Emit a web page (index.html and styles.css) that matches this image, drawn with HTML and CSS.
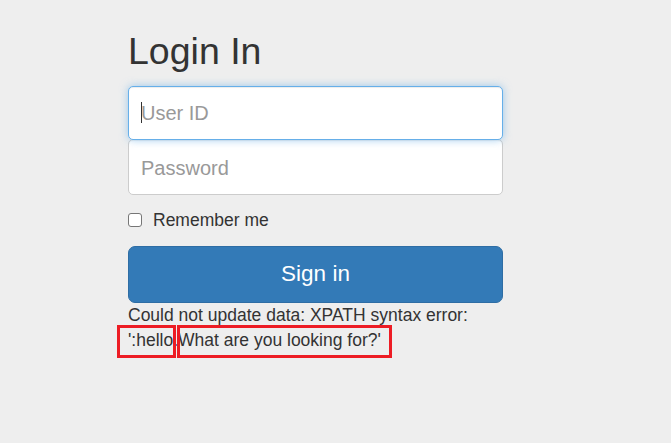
FILE: index.html
```html
<!DOCTYPE html>
<html lang="en">
<head>
<meta charset="utf-8">
<title>Login In</title>
<link rel="stylesheet" href="styles.css">
</head>
<body>
<div class="page">
  <form class="form-signin">
    <h2 class="heading">Login In</h2>
    <div class="field-wrap">
      <input class="control control-top" type="text" placeholder="User ID">
      <span class="caret"></span>
    </div>
    <input class="control control-bottom" type="password" placeholder="Password">
    <label class="check-row">
      <input class="check" type="checkbox">
      <span>Remember me</span>
    </label>
    <button class="btn-signin" type="button">Sign in</button>
    <div class="error">Could not update data: XPATH syntax error: <span class="mark m1">':hello</span>.<span class="mark m2">What are you looking for?'</span></div>
  </form>
</div>
</body>
</html>
```

FILE: styles.css
```css
html, body {
  margin: 0;
  padding: 0;
  background: #eeeeee;
}
body {
  font-family: "Liberation Sans", Arial, sans-serif;
  font-size: 17.5px;
  line-height: 25px;
  color: #333333;
}
.page {
  padding: 31px 0 40px 128px;
}
.form-signin {
  width: 375px;
  display: flex;
  flex-direction: column;
}
.heading {
  margin: 0 0 14px 0;
  font-size: 37.5px;
  line-height: 41px;
  font-weight: 500;
  color: #333333;
}
.field-wrap {
  position: relative;
  z-index: 2;
  display: flex;
}
.control {
  box-sizing: border-box;
  width: 100%;
  margin: 0;
  padding: 0 12px;
  font-family: "Liberation Sans", Arial, sans-serif;
  font-size: 20px;
  color: #555555;
  background: #ffffff;
  border: 1px solid #cccccc;
  border-radius: 5px;
  outline: none;
  box-shadow: inset 0 1px 1px rgba(0, 0, 0, 0.075);
}
.control::placeholder {
  color: #999999;
}
.control-top {
  height: 54px;
  border-color: #66afe9;
  box-shadow: inset 0 1px 1px rgba(0, 0, 0, 0.075), 0 0 8px rgba(102, 175, 233, 0.6);
}
.caret {
  position: absolute;
  left: 13px;
  top: 16px;
  width: 1px;
  height: 21px;
  background: #333333;
}
.control-bottom {
  height: 56px;
  margin-top: -1px;
  padding-top: 2px;
  position: relative;
  z-index: 1;
}
.check-row {
  display: flex;
  align-items: center;
  gap: 11px;
  margin: 12.5px 0 13.5px 0;
  height: 25px;
}
.check {
  appearance: none;
  -webkit-appearance: none;
  box-sizing: border-box;
  width: 14px;
  height: 14px;
  margin: 0;
  border: 1px solid #767676;
  border-radius: 3px;
  background: #ffffff;
}
.btn-signin {
  box-sizing: border-box;
  width: 100%;
  height: 57px;
  margin: 0;
  padding: 0 20px 2px;
  font-family: "Liberation Sans", Arial, sans-serif;
  font-size: 22.5px;
  color: #ffffff;
  background: #337ab7;
  border: 1px solid #2e6da4;
  border-radius: 7px;
}
.error {
  margin: 0;
}
.mark {
  position: relative;
}
.mark::after {
  content: "";
  position: absolute;
  top: -5px;
  bottom: -8px;
  border: 3px solid #ed1c24;
}
.m1::after {
  left: -11px;
  right: -3px;
}
.m2::after {
  left: -1px;
  right: -11px;
}
```
